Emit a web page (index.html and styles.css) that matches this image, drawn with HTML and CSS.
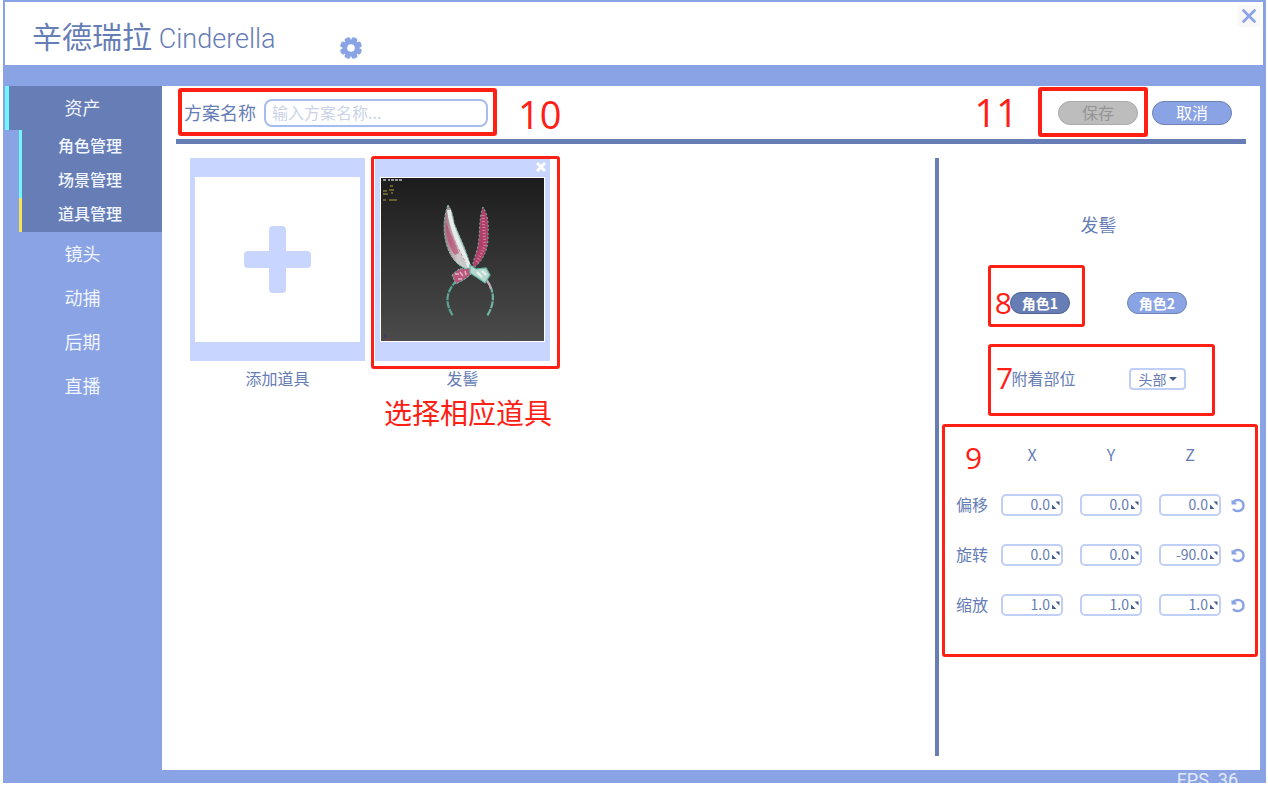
FILE: index.html
```html
<!DOCTYPE html>
<html lang="zh-CN">
<head>
    <meta charset="UTF-8">
    <meta name="viewport" content="width=device-width, initial-scale=1.0">
    <title>辛德瑞拉 Cinderella</title>
    <link rel="stylesheet" href="styles.css">
</head>
<body>
    <div class="app">
        <header class="titlebar">
            <h1 class="brand">辛德瑞拉 <span class="brand-en">Cinderella</span></h1>
            <button class="icon-btn settings" aria-label="设置">
                <svg width="22" height="22" viewBox="-11 -11 22 22">
                    <g fill="#8aa3e4">
                        <rect x="-3" y="-11" width="6" height="22" rx="2" transform="rotate(22.5)"/>
                        <rect x="-3" y="-11" width="6" height="22" rx="2" transform="rotate(67.5)"/>
                        <rect x="-3" y="-11" width="6" height="22" rx="2" transform="rotate(112.5)"/>
                        <rect x="-3" y="-11" width="6" height="22" rx="2" transform="rotate(157.5)"/>
                        <circle r="8"/>
                    </g>
                    <circle r="3.8" fill="#fff"/>
                </svg>
            </button>
            <button class="icon-btn close" aria-label="关闭">
                <svg width="14" height="14" viewBox="0 0 14 14">
                    <path d="M1.500 1.500L12.500 12.500M12.500 1.500L1.500 12.500" stroke="#8aa3e4" stroke-width="2.600" stroke-linecap="round"/>
                </svg>
            </button>
        </header>

        <div class="workspace">
            <nav class="sidebar">
                <a class="nav-item active" href="#">资产</a>
                <div class="subnav">
                    <a href="#">角色管理</a>
                    <a href="#">场景管理</a>
                    <a class="current" href="#">道具管理</a>
                </div>
                <a class="nav-item" href="#">镜头</a>
                <a class="nav-item" href="#">动捕</a>
                <a class="nav-item" href="#">后期</a>
                <a class="nav-item" href="#">直播</a>
            </nav>

            <main class="content">
                <div class="toolbar">
                    <div class="scheme">
                        <label for="scheme-name">方案名称</label>
                        <input type="text" id="scheme-name" placeholder="输入方案名称...">
                        <span class="mark mark-10"></span>
                        <span class="mark-text num-10">10</span>
                    </div>
                    <div class="actions">
                        <div class="save-wrap">
                            <button class="pill save" disabled>保存</button>
                            <span class="mark mark-11"></span>
                            <span class="mark-text num-11">11</span>
                        </div>
                        <button class="pill">取消</button>
                    </div>
                </div>

                <div class="editor">
                    <section class="gallery">
                        <div class="prop">
                            <button class="card" aria-label="添加道具">
                                <svg class="thumb" viewBox="0 0 165 165">
                                    <rect width="165" height="165" fill="#fff"/>
                                    <rect x="74" y="49" width="17" height="67" rx="4" fill="#c8d6ff"/>
                                    <rect x="49" y="74" width="67" height="17" rx="4" fill="#c8d6ff"/>
                                </svg>
                            </button>
                            <p class="caption">添加道具</p>
                        </div>
                        <div class="prop">
                            <div class="card">
                                <svg class="thumb" viewBox="0 0 165 165">
                                    <defs>
                                        <linearGradient id="stage" x1="0" y1="0" x2="0" y2="1">
                                            <stop offset="0" stop-color="#1c1c1c"/>
                                            <stop offset="1" stop-color="#4b4b4b"/>
                                        </linearGradient>
                                        <linearGradient id="ear" x1="0" y1="0" x2="1" y2="0">
                                            <stop offset="0" stop-color="#a3707f"/>
                                            <stop offset="0.5" stop-color="#cfc8c8"/>
                                            <stop offset="1" stop-color="#b9cfc9"/>
                                        </linearGradient>
                                    </defs>
                                    <rect width="165" height="165" fill="#fff"/>
                                    <rect x="1" y="1" width="163" height="163" fill="url(#stage)"/>
                                    <!-- viewport overlay -->
                                    <path d="M3 3h3M8 3h2M11 3h12" stroke="#999" stroke-width="2" stroke-dasharray="3 1"/>
                                    <path d="M10 9h3M3 14h4M9 13h5M3 17h5M11 16h2M3 23h3M9 23h8" stroke="#7d7836" stroke-width="1.5"/>
                                    <path d="M5 157v4" stroke="#30307f"/>
                                    <path d="M6 163h4" stroke="#a03030"/>
                                    <!-- hoop -->
                                    <path d="M77 103C65 116 65 126 73 139" fill="none" stroke="#5aa394" stroke-width="2.2" stroke-dasharray="7 1"/>
                                    <path d="M106 102C114 113 116 125 107 139" fill="none" stroke="#6fb3a4" stroke-width="2.2" stroke-dasharray="7 1"/>
                                    <path d="M106 103q4 4 5 9" fill="none" stroke="#c9a9b3" stroke-width="2"/>
                                    <!-- left ear -->
                                    <path d="M68 28C63 41 63 56 67 69C71 82 79 91 91 93C88 76 79 59 74 46C73 38 71 32 68 28Z" fill="url(#ear)" stroke="#78bcae" stroke-dasharray="3 1"/>
                                    <path d="M66 45C65 56 69 71 75 78L79 76C76 66 70 57 66 45Z" fill="#b33f6b" opacity="0.6"/>
                                    <path d="M69 33C71 51 81 72 90 91" fill="none" stroke="#e6ecea" stroke-width="4"/>
                                    <path d="M70 54L77 69L86 86" fill="none" stroke="#c98ba0" stroke-dasharray="3 2"/>
                                    <!-- right ear -->
                                    <path d="M103 30C98 42 101 58 97 73C95 80 92 86 93 91C104 84 109 70 108 56C109 45 107 36 103 30Z" fill="#b04069" stroke="#6fb3a4" stroke-dasharray="2 2"/>
                                    <path d="M103 38L105 69L97 85" fill="none" stroke="#d07f9f" stroke-width="3" stroke-dasharray="1 2"/>
                                    <!-- knot -->
                                    <path d="M91 91L79 92L72 98L76 107L85 102L91 97Z" fill="#b8567c" stroke="#78bcae" stroke-dasharray="3 1"/>
                                    <path d="M75 97h4M80 95l3 4M78 102h4M85 94l1 4" fill="none" stroke="#dfb5c5" stroke-width="1.5"/>
                                    <path d="M90 88L96 92L106 91L110 98L105 106L98 101L90 96Z" fill="#b7d8cf" stroke="#65b7a5" stroke-width="1.2"/>
                                    <path d="M97 95l5 5M102 94l4 4" stroke="#e9f1ee" stroke-width="2"/>
                                </svg>
                                <button class="remove" aria-label="删除">
                                    <svg width="10" height="10" viewBox="0 0 10 10">
                                        <path d="M2 2L8 8M8 2L2 8" stroke="#fff" stroke-width="3" stroke-linecap="square"/>
                                    </svg>
                                </button>
                                <span class="mark mark-prop"></span>
                            </div>
                            <p class="caption">发髻</p>
                            <span class="mark-text tip">选择相应道具</span>
                        </div>
                    </section>

                    <aside class="panel">
                        <h2>发髻</h2>
                        <div class="roles">
                            <div class="role">
                                <button class="pill small selected">角色1</button>
                                <span class="mark mark-8"></span>
                                <span class="mark-text num-8">8</span>
                            </div>
                            <button class="pill small">角色2</button>
                        </div>
                        <div class="attach">
                            <label for="attach-part">附着部位</label>
                            <div class="select">
                                <select id="attach-part">
                                    <option>头部</option>
                                </select>
                                <svg width="8" height="4" viewBox="0 0 8 4"><path d="M0 0h8L4 4z" fill="#45598c"/></svg>
                            </div>
                            <span class="mark mark-7"></span>
                            <span class="mark-text num-7">7</span>
                        </div>
                        <div class="transform" id="transform">
                            <span></span>
                            <span class="axis">X</span>
                            <span class="axis">Y</span>
                            <span class="axis">Z</span>
                            <span></span>
                        </div>
                    </aside>
                </div>
            </main>
        </div>

        <footer class="status">FPS  36</footer>
    </div>

    <script src="script.js"></script>
</body>
</html>
```
FILE: styles.css
```css
* {
    box-sizing: border-box;
}
body {
    margin: 0;
    padding: 0 2px 2px 3px;
    height: 100vh;
    background: #fff;
    color: #667db5;
    font-family: "Noto Sans CJK SC", "Noto Sans", sans-serif;
    font-size: 16px;
    line-height: 24px;
}
button, input, select {
    font: inherit;
    color: inherit;
    margin: 0;
    padding: 0;
}
button {
    border: none;
    background: none;
    cursor: pointer;
}
a {
    color: #f1f5ff;
    text-decoration: none;
}
.app {
    display: flex;
    flex-direction: column;
    height: 100%;
    background: #8aa3e4;
    overflow: hidden;
}

/* title bar */
.titlebar {
    display: flex;
    align-items: center;
    min-height: 63px;
    margin: 2px 3px 0 2px;
    padding: 0 3px 0 27px;
    background: #fff;
}
.brand {
    margin: 0;
    font-size: 30px;
    font-weight: 400;
    line-height: 48px;
    padding-top: 6px;
    white-space: nowrap;
}
.brand-en {
    font-family: Roboto, sans-serif;
    font-size: 27px;
    font-weight: 300;
}
.icon-btn {
    display: flex;
    align-items: center;
    justify-content: center;
}
.settings {
    margin: 28px 0 0 64px;
    align-self: flex-start;
    padding: 7px 0 0;
}
.close {
    width: 22px;
    height: 22px;
    margin: 3px 0 0 auto;
    align-self: flex-start;
    background: #f8f8f8;
}

/* sidebar */
.workspace {
    display: flex;
    flex: 1;
    min-height: 0;
    margin: 21px 6px 0 0;
}
.sidebar {
    flex: 0 0 159px;
    padding-left: 2px;
    text-align: center;
}
.nav-item {
    display: block;
    padding: 0 6px 2px 0;
    border-left: 4px solid transparent;
    font-size: 18px;
    line-height: 42px;
}
.nav-item.active {
    border-left-color: #6ff6ff;
    background: #667db5;
}
.subnav {
    margin-left: 14px;
    background: #667db5;
    font-weight: 500;
}
.subnav a {
    display: block;
    padding: 0 4px 4px 0;
    border-left: 3px solid #6ff6ff;
    line-height: 30px;
}
.subnav .current {
    border-left-color: #f6e653;
}

/* content */
.content {
    display: flex;
    flex: 1;
    flex-direction: column;
    padding: 0 14px 14px;
    background: #fff;
}
.toolbar {
    display: flex;
    align-items: center;
    justify-content: space-between;
    min-height: 58px;
    padding: 0 14px 0 8px;
    border-bottom: 5px solid #667db5;
}
.scheme {
    position: relative;
    display: flex;
    align-items: center;
    gap: 8px;
    font-size: 18px;
}
.scheme label {
    padding-bottom: 2px;
}
.scheme input {
    width: 224px;
    height: 28px;
    padding: 0 6px 2px;
    border: 2px solid #a9bcf0;
    border-radius: 8px;
    outline: none;
    font-size: 16px;
}
.scheme input::placeholder {
    color: #ccd3e8;
}
.actions {
    display: flex;
    gap: 14px;
}
.save-wrap, .role {
    position: relative;
    display: flex;
}
.pill {
    width: 80px;
    height: 24px;
    padding-bottom: 2px;
    border: 1px solid #6f82b4;
    border-radius: 12px;
    background: #8aa3e4;
    color: #fff;
    line-height: 20px;
}
.pill.save {
    border-color: #aaa;
    background: #bdbdbd;
    color: #949494;
}
.pill.small {
    width: 60px;
    height: 22px;
    font-size: 14px;
    font-weight: 700;
}
.pill.selected {
    background: #667db5;
    border-color: #4f6393;
}

.editor {
    display: flex;
    flex: 1;
    min-height: 0;
    padding-top: 14px;
}
.gallery {
    display: flex;
    flex: 1;
    flex-wrap: wrap;
    align-content: flex-start;
    gap: 10px;
    padding-left: 14px;
}
.prop {
    position: relative;
    width: 175px;
}
.card {
    position: relative;
    display: block;
    width: 100%;
    padding: 19px 5px;
    background: #c8d6ff;
}
.thumb {
    display: block;
    width: 100%;
}
.remove {
    position: absolute;
    top: 4px;
    right: 4px;
    display: flex;
}
.caption {
    margin: 5px 0 0;
    text-align: center;
}

/* right panel */
.panel {
    flex: 0 0 311px;
    padding: 54px 0 0 12px;
    border-left: 4px solid #667db5;
}
.panel h2 {
    margin: 0;
    font-size: 18px;
    font-weight: 400;
    text-align: center;
}
.roles {
    display: flex;
    justify-content: center;
    gap: 57px;
    margin-top: 56px;
}
.attach {
    position: relative;
    display: flex;
    align-items: center;
    justify-content: center;
    gap: 53px;
    height: 22px;
    margin-top: 54px;
}
.attach label {
    padding-bottom: 2px;
}
.select {
    position: relative;
}
.select select {
    display: block;
    width: 57px;
    height: 22px;
    padding: 0 8px;
    border: 2px solid #c0cff6;
    border-radius: 4px;
    appearance: none;
    background: #fff;
    font-size: 14px;
    line-height: 18px;
}
.select svg {
    position: absolute;
    top: 9px;
    right: 9px;
    pointer-events: none;
}
.transform {
    position: relative;
    display: grid;
    grid-template-columns: 45px 79fr 79fr 71fr 16px;
    grid-auto-rows: 22px;
    align-items: center;
    row-gap: 28px;
    margin-top: 54px;
    padding-left: 5px;
}
.axis, .row-name {
    padding-bottom: 2px;
}
.axis {
    width: 62px;
    text-align: center;
}
.field {
    position: relative;
    width: 62px;
}
.field input {
    display: block;
    width: 100%;
    height: 22px;
    padding: 0 11px 2px 0;
    border: 2px solid #c0cff6;
    border-radius: 5px;
    outline: none;
    background: #fff;
    font-size: 14px;
    line-height: 18px;
    text-align: right;
}
.field svg {
    position: absolute;
    top: 7px;
    right: 3px;
}
.reset {
    display: flex;
}

/* guide annotations */
.mark {
    position: absolute;
    border: 3px solid #ff2015;
    border-radius: 3px;
    pointer-events: none;
}
.mark-10 {
    inset: -11px -9px -9px -6px;
    border-width: 4px;
}
.mark-11 {
    inset: -14px -10px -12px -20px;
    border-width: 4px;
}
.mark-prop {
    inset: -2px -10px -8px -4px;
}
.mark-8 {
    inset: -27px -15px -13px -22px;
}
.mark-7 {
    inset: -24px 31px -26px 37px;
}
.mark-9 {
    inset: -20px -12px -41px -9px;
}
.mark-text {
    position: absolute;
    color: #ff2015;
    font-family: "Open Sans", "Noto Sans CJK SC", sans-serif;
    font-size: 30px;
    line-height: 30px;
    white-space: nowrap;
    pointer-events: none;
}
.num-10, .num-11 {
    font-size: 38px;
    line-height: 38px;
}
.num-10 {
    left: 334px;
    top: -4px;
}
.num-11 {
    right: 120px;
    top: -8px;
}
.num-8 {
    right: 58px;
    top: -4px;
}
.num-7 {
    left: 45px;
    top: -5px;
}
.num-9 {
    left: 14px;
    top: -1px;
}
.tip {
    left: 9px;
    top: 240px;
    font-size: 28px;
}

.status {
    height: 13px;
    padding-right: 28px;
    overflow: hidden;
    color: #e3eaff;
    font-family: Roboto, sans-serif;
    font-size: 18px;
    line-height: 20px;
    text-align: right;
    white-space: pre;
}
```
FILE: script.js
```js
const rows = [
    { name: '偏移', values: ['0.0', '0.0', '0.0'] },
    { name: '旋转', values: ['0.0', '0.0', '-90.0'] },
    { name: '缩放', values: ['1.0', '1.0', '1.0'] }
];
const axes = ['X', 'Y', 'Z'];
const table = document.getElementById('transform');

let html = '';
rows.forEach(row => {
    html += `<span class="row-name">${row.name}</span>`;
    row.values.forEach((value, i) => {
        html += `
            <div class="field">
                <input type="text" value="${value}" aria-label="${row.name} ${axes[i]}">
                <svg width="8" height="8" viewBox="0 0 8 8"><path d="M0 3.500V8h4.500zM3.500 0.500h4v4z" fill="#45598c"/></svg>
            </div>`;
    });
    html += `
        <button class="reset" aria-label="重置${row.name}">
            <svg width="16" height="16" viewBox="0 0 16 16">
                <path d="M3 5C6 1.500 13.500 2.500 13.500 8.500C13.500 14.500 6 15.500 3 12" fill="none" stroke="#8aa3e4" stroke-width="2.400"/>
                <path d="M1.500 3v4.500h5V6z" fill="#8aa3e4"/>
            </svg>
        </button>`;
});
html += '<span class="mark mark-9"></span><span class="mark-text num-9">9</span>';
table.insertAdjacentHTML('beforeend', html);
```
